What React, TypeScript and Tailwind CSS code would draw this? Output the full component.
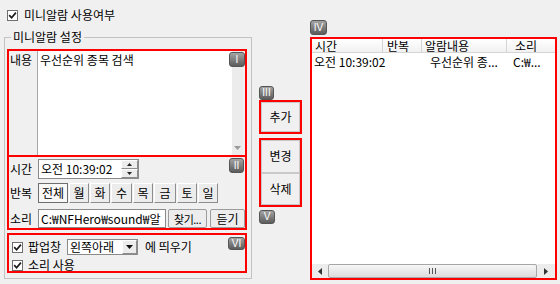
import React from "react";

const days = [
  { label: "월", w: "w-[20px]" },
  { label: "화", w: "w-[20px]" },
  { label: "수", w: "w-[21px]" },
  { label: "목", w: "w-[20px]" },
  { label: "금", w: "w-[22px]" },
  { label: "토", w: "w-[20px]" },
  { label: "일", w: "w-[20px]" },
];

function Badge({ label, className = "" }: { label: string; className?: string }) {
  return (
    <div
      className={`flex items-center justify-center rounded-[3px] border border-[#555] bg-linear-to-b from-[#a4a4a4] to-[#5c5c5c] font-['Liberation_Sans',sans-serif] text-[10px] leading-none text-white ${className}`}
    >
      {label}
    </div>
  );
}

function Check() {
  return (
    <span className="flex h-[11px] w-[11px] shrink-0 items-center justify-center border border-[#6e6e6e] bg-white">
      <svg width="9" height="9" viewBox="0 0 9 9">
        <path d="M1.2 4.2 L3.6 6.8 L7.9 1.6" fill="none" stroke="#1a1a1a" strokeWidth="1.7" />
      </svg>
    </span>
  );
}

const raised =
  "flex items-center justify-center border border-t-white border-l-white border-r-[#8d8d8d] border-b-[#8d8d8d] bg-[#ececec]";

export default function App() {
  return (
    <div className="h-[284px] w-[560px] overflow-hidden bg-[#f0f0f0] font-['Noto_Sans_CJK_KR','Liberation_Sans',sans-serif] text-[12px] leading-[14px] text-black">
      {/* top checkbox */}
      <div className="flex h-[20px] items-center gap-[6px] pl-[7px] pt-[10px]">
        <Check />
        <span>미니알람 사용여부</span>
      </div>

      <div className="flex">
        {/* settings group */}
        <fieldset className="ml-[4px] mt-[10px] h-[249px] w-[248px] border border-[#c3c3c3] pl-[2px] pr-[4px]">
          <legend className="ml-[4px] px-[2px]">미니알람 설정</legend>

          {/* I: content */}
          <div className="relative mt-[5px] flex h-[108px] border-2 border-[#ff0000]">
            <div className="w-[28px] pl-[1px] pt-[2px]">내용</div>
            <div className="flex flex-1 border-l border-[#a8a8a8] bg-white">
              <div className="flex-1 pl-[2px] pt-[2px]">우선순위 종목 검색</div>
              <div className="flex w-[11px] flex-col items-center justify-end bg-[#ececec] pb-[5px]">
                <svg width="7" height="4" viewBox="0 0 7 4">
                  <path d="M0 0 L7 0 L3.5 4 Z" fill="#9a9a9a" />
                </svg>
              </div>
            </div>
            <div className="w-[2px]" />
            <Badge label="I" className="absolute right-0 top-[1px] h-[15px] w-[16px]" />
          </div>

          {/* II: time / repeat / sound */}
          <div className="relative -mt-[2px] flex h-[75px] flex-col border-2 border-[#ff0000]">
            <div className="mt-[2px] flex h-[20px] items-center">
              <div className="w-[29px] pl-[1px]">시간</div>
              <div className="flex h-[20px] w-[101px] border border-[#8a8a8a] bg-white">
                <div className="flex flex-1 items-center pl-[2px]">오전 10:39:02</div>
                <div className="flex w-[17px] flex-col">
                  <div className={`${raised} h-1/2`}>
                    <svg width="5" height="3" viewBox="0 0 5 3">
                      <path d="M0 3 L5 3 L2.5 0 Z" fill="#222" />
                    </svg>
                  </div>
                  <div className={`${raised} h-1/2`}>
                    <svg width="5" height="3" viewBox="0 0 5 3">
                      <path d="M0 0 L5 0 L2.5 3 Z" fill="#222" />
                    </svg>
                  </div>
                </div>
              </div>
            </div>

            <div className="mt-[4px] flex h-[20px] items-center">
              <div className="w-[29px] pl-[1px]">반복</div>
              <div className="flex h-[20px] gap-[1px]">
                <div className="flex w-[30px] items-center justify-center border border-[#6d6d6d] bg-[#f8f8f8]">
                  전체
                </div>
                {days.map((d) => (
                  <div key={d.label} className={`${raised} ${d.w}`}>
                    {d.label}
                  </div>
                ))}
              </div>
            </div>

            <div className="mt-[6px] flex h-[19px] items-center">
              <div className="w-[29px] pl-[1px]">소리</div>
              <div className="flex h-[19px] w-[128px] items-center overflow-hidden whitespace-nowrap border border-[#8a8a8a] bg-white pl-[2px]">
                C:₩NFHero₩sound₩알
              </div>
              <div className="ml-[2px] flex h-[19px] w-[39px] items-center justify-center whitespace-nowrap rounded-[2px] border border-[#9c9c9c] bg-[#ededed] text-[11px] tracking-[-0.5px]">
                찾기...
              </div>
              <div className="ml-[3px] flex h-[19px] w-[35px] items-center justify-center rounded-[2px] border border-[#9c9c9c] bg-[#ededed]">
                듣기
              </div>
            </div>
            <Badge label="II" className="absolute right-[1px] top-[1px] h-[15px] w-[15px]" />
          </div>

          {/* VI: popup */}
          <div className="relative mt-[3px] flex h-[40px] flex-col border-2 border-[#ff0000] pl-[3px]">
            <div className="mt-[4px] flex h-[16px] items-center">
              <Check />
              <span className="ml-[5px] w-[39px]">팝업창</span>
              <div className="flex h-[16px] w-[71px] border border-[#8a8a8a] bg-white">
                <div className="flex flex-1 items-center pl-[2px]">왼쪽아래</div>
                <div className={`${raised} w-[15px]`}>
                  <svg width="7" height="4" viewBox="0 0 7 4">
                    <path d="M0 0 L7 0 L3.5 4 Z" fill="#111" />
                  </svg>
                </div>
              </div>
              <span className="ml-[7px]">에 띄우기</span>
            </div>
            <div className="mt-[3px] flex h-[14px] items-center">
              <Check />
              <span className="ml-[5px]">소리 사용</span>
            </div>
            <Badge label="VI" className="absolute right-0 top-[2px] h-[13px] w-[17px]" />
          </div>
        </fieldset>

        {/* middle buttons */}
        <div className="ml-[7px] mt-[66px] flex w-[43px] flex-col">
          <Badge label="III" className="h-[14px] w-[15px]" />
          <div className="flex h-[34px] border-2 border-[#ff0000]">
            <div className="flex flex-1 items-center justify-center border border-[#c9c9c9] bg-[#f0f0f0]">추가</div>
          </div>
          <div className="mt-[4px] flex h-[69px] flex-col border-2 border-[#ff0000]">
            <div className="flex flex-1 items-center justify-center border border-[#c9c9c9] bg-[#f0f0f0]">변경</div>
            <div className="flex flex-1 items-center justify-center border border-[#c9c9c9] bg-[#f0f0f0]">삭제</div>
          </div>
          <Badge label="V" className="mt-[3px] h-[14px] w-[16px]" />
        </div>

        {/* alarm list */}
        <div className="ml-[8px] flex w-[247px] flex-col">
          <Badge label="IV" className="h-[15px] w-[17px]" />
          <div className="mt-[2px] flex h-[243px] flex-col border-2 border-[#ff0000] bg-white">
            <div className="flex h-[14px] border-b border-[#d5d5d5] bg-linear-to-b from-white to-[#f1f1f1]">
              <div className="w-[71px] border-r border-[#d5d5d5] pl-[3px]">시간</div>
              <div className="w-[39px] border-r border-[#d5d5d5] pl-[4px]">반복</div>
              <div className="w-[85px] border-r border-[#d5d5d5] pl-[3px]">알람내용</div>
              <div className="flex-1 pl-[8px]">소리</div>
            </div>
            <div className="flex h-[15px] items-center pt-[2px]">
              <div className="w-[71px] whitespace-nowrap pl-[2px]">오전 10:39:02</div>
              <div className="w-[39px]" />
              <div className="w-[85px] whitespace-nowrap pl-[8px]">우선순위 종...</div>
              <div className="flex-1 whitespace-nowrap pl-[6px]">C:₩...</div>
            </div>
            <div className="flex-1" />
            <div className="flex h-[14px] bg-[#ececec]">
              <div className="flex w-[16px] items-center justify-center">
                <svg width="4" height="7" viewBox="0 0 4 7">
                  <path d="M4 0 L4 7 L0 3.5 Z" fill="#333" />
                </svg>
              </div>
              <div className="flex flex-1 items-center justify-center rounded-[2px] border border-[#a7a7a7] bg-linear-to-b from-[#f7f7f7] to-[#dcdcdc]">
                <svg width="7" height="6" viewBox="0 0 7 6">
                  <path d="M0.5 0 V6 M3.5 0 V6 M6.5 0 V6" stroke="#555" strokeWidth="1" />
                </svg>
              </div>
              <div className="flex w-[18px] items-center justify-center">
                <svg width="4" height="7" viewBox="0 0 4 7">
                  <path d="M0 0 L0 7 L4 3.5 Z" fill="#333" />
                </svg>
              </div>
            </div>
          </div>
        </div>
      </div>
    </div>
  );
}
